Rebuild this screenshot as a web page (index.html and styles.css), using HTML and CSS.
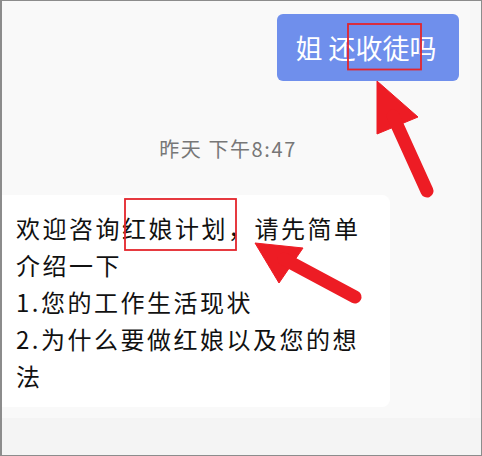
FILE: index.html
```html
<!DOCTYPE html>
<html lang="zh-CN">
<head>
<meta charset="utf-8">
<link rel="stylesheet" href="styles.css">
</head>
<body>
<div class="frame">
  <div class="chat">
    <div class="row-out">
      <div class="bubble-out">姐 还收徒吗</div>
    </div>
    <div class="time">昨天 下午8:47</div>
    <div class="bubble-in">欢迎咨询红娘计划，请先简单<br>介绍一下<br>1.您的工作生活现状<br>2.为什么要做红娘以及您的想<br>法</div>
  </div>
  <div class="footer"></div>
  <svg class="marks" width="482" height="456" viewBox="0 0 482 456">
    <rect x="348" y="24" width="73" height="45.5" fill="none" stroke="#e4252c" stroke-width="1.8"/>
    <rect x="125" y="199" width="111" height="51" fill="none" stroke="#e4252c" stroke-width="1.8"/>
    <g fill="#ed1c24" stroke="#ed1c24">
      <polygon points="377,81 377,134 418,117" stroke-width="1" stroke-linejoin="round"/>
      <line x1="393" y1="116" x2="427" y2="191" stroke-width="13" stroke-linecap="round"/>
      <polygon points="255,243 303,248 279,283" stroke-width="1" stroke-linejoin="round"/>
      <line x1="284" y1="259" x2="355" y2="297" stroke-width="13" stroke-linecap="round"/>
    </g>
  </svg>
</div>
</body>
</html>
```
FILE: styles.css
```css
* { box-sizing: border-box; }
html, body { margin: 0; padding: 0; }
body {
  width: 482px;
  height: 456px;
  overflow: hidden;
  font-family: "Noto Sans CJK SC", "Noto Sans", sans-serif;
}
.frame {
  position: relative;
  width: 482px;
  height: 456px;
  border: 1px solid #8c8c8c;
  border-left-width: 2px;
  background: #f9f9f9;
  display: flex;
  flex-direction: column;
}
.chat {
  flex: 1;
  display: flex;
  flex-direction: column;
  border-right: 11px solid #f7f7f7;
}
.row-out {
  display: flex;
  justify-content: flex-end;
  padding-top: 13px;
  padding-right: 11px;
}
.bubble-out {
  background: #6f8fec;
  color: #fff;
  border-radius: 6px;
  height: 67px;
  width: 182px;
  display: flex;
  align-items: center;
  justify-content: center;
  font-size: 27px;
  padding-left: 2px;
  padding-right: 6px;
  white-space: nowrap;
}
.time {
  margin-top: 56px;
  text-align: center;
  padding-right: 16px;
  font-size: 20px;
  letter-spacing: 1.6px;
  color: #777;
  line-height: 24px;
}
.bubble-in {
  margin-top: 34px;
  width: 388px;
  background: #fff;
  border-radius: 0 8px 8px 0;
  padding: 14px 10px 13px 14px;
  font-size: 24px;
  letter-spacing: 2.5px;
  line-height: 37px;
  color: #111;
  white-space: nowrap;
}
.footer {
  height: 37px;
  background: #f4f4f4;
}
.marks {
  position: absolute;
  left: -2px;
  top: -1px;
  pointer-events: none;
}
```
